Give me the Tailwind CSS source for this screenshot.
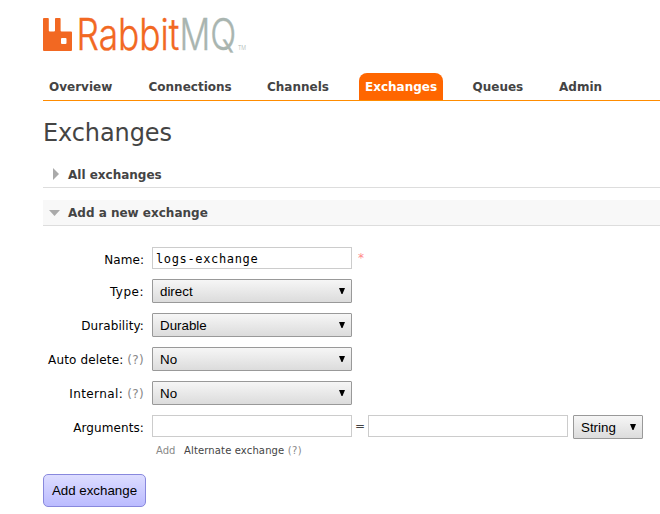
<!DOCTYPE html>
<html lang="en">
<head>
<meta charset="utf-8">
<title>RabbitMQ Management</title>
<script src="https://cdn.jsdelivr.net/npm/@tailwindcss/browser@4"></script>
</head>
<body class="bg-white overflow-hidden h-[514px] w-[660px] pl-[43px] font-['DejaVu_Sans',sans-serif] text-[12px] leading-[14px] text-[#444]">
<header class="pt-[14px]">
<svg class="block overflow-visible" width="210" height="42" viewBox="43 14 210 42" role="img">
<path fill="#f26822" d="M44 18h4q.8 0 .8 1v11.500q0 1 1 1h4.200q1 0 1-1V19q0-1 .8-1h4q.8 0 .8 1v11.500q0 1 1 1h9.400q1 0 1 1V50q0 1-1 1H44q-1 0-1-1V19q0-1 1-1zM61 39v4q0 1 1 1h3.500q1 0 1-1v-4q0-1-1-1H62q-1 0-1 1z" fill-rule="evenodd"/>
<g font-family="Inter" font-weight="300">
<text transform="translate(76.500 50) scale(.7 1)" font-size="44" fill="#f26822" stroke="#f26822" stroke-width=".4" textLength="147" lengthAdjust="spacingAndGlyphs">Rabbit</text>
<text transform="translate(179.500 50) scale(.7 1)" font-size="44" fill="#a9b5b0" stroke="#a9b5b0" stroke-width=".4" textLength="81" lengthAdjust="spacingAndGlyphs">MQ</text>
<text x="238" y="49.500" font-size="6" fill="#a9b5b0" textLength="8" lengthAdjust="spacingAndGlyphs">TM</text>
</g></svg>
</header>
<nav class="mt-[17px] h-[28px] border-b border-[#ff8c00] flex items-start font-bold">
<a class="h-[27px] w-[82px] mr-[17.500px] px-[6px] pt-[7px]">Overview</a>
<a class="h-[27px] w-[102px] mr-[16.500px] px-[6px] pt-[7px]">Connections</a>
<a class="h-[27px] w-[81px] mr-[17px] px-[6px] pt-[7px]">Channels</a>
<a class="h-[27px] w-[84px] mr-[23.500px] px-[6px] pt-[7px] rounded-t-[8px] bg-[#ff6600] text-white">Exchanges</a>
<a class="h-[27px] w-[69px] mr-[17.500px] px-[6px] pt-[7px]">Queues</a>
<a class="h-[27px] px-[6px] pt-[7px]">Admin</a>
</nav>
<h1 class="mt-[17px] h-[30px] text-[24px] leading-[30px] tracking-[-0.1px]">Exchanges</h1>
<h2 class="mt-[14px] h-[26px] border-b border-[#ddd] flex items-start font-bold pt-[6px]">
<svg class="ml-[10px] mr-[9px] block" width="6" height="12" viewBox="0 0 6 12"><path fill="#aaa" d="M0 0l6 6-6 6z"/></svg>All exchanges</h2>
<h2 class="mt-[12px] h-[26px] border-b border-[#ddd] bg-[#f8f8f8] flex items-start font-bold pt-[6px]">
<svg class="ml-[6px] mr-[8px] mt-[4px] block" width="11" height="6" viewBox="0 0 11 6"><path fill="#aaa" d="M0 0h11L5.500 6z"/></svg>Add a new exchange</h2>
<form class="text-black">
<div class="mt-[21px] grid grid-cols-[101px_1fr] gap-x-[8px] grid-rows-[32px_34px_34px_34px_34px_26px_33px]">
<label class="text-right pt-[6px] tracking-[0.05px]">Name:</label>
<div class="flex"><span class="w-[200px] h-[22px] border border-[#ccc] pl-[3px] pt-[4px] font-['DejaVu_Sans_Mono',monospace] tracking-[0.64px]">logs-exchange</span><span class="ml-[6px] pt-[4px] text-[#f88]">*</span></div>

<label class="text-right pt-[6px] tracking-[0.5px]">Type:</label>
<div class="w-[200px] h-[24px] border border-[#999] rounded-[1px] bg-linear-to-b from-[#f6f6f6] to-[#dcdcdc] px-[7px] flex justify-between font-['Liberation_Sans',sans-serif] text-[13.333px] leading-[24px]"><span>direct</span><svg class="mt-[8px] mr-[-1px]" width="6" height="6" viewBox="0 0 6 6"><path d="M0 0h6L3.500 6h-1z"/></svg></div>

<label class="text-right pt-[6px] tracking-[0.1px]">Durability:</label>
<div class="w-[200px] h-[24px] border border-[#999] rounded-[1px] bg-linear-to-b from-[#f6f6f6] to-[#dcdcdc] px-[7px] flex justify-between font-['Liberation_Sans',sans-serif] text-[13.333px] leading-[24px]"><span>Durable</span><svg class="mt-[8px] mr-[-1px]" width="6" height="6" viewBox="0 0 6 6"><path d="M0 0h6L3.500 6h-1z"/></svg></div>

<label class="text-right pt-[6px] whitespace-nowrap tracking-[0.15px]">Auto delete: <span class="text-[#888] tracking-[0.3px]">(?)</span></label>
<div class="w-[200px] h-[24px] border border-[#999] rounded-[1px] bg-linear-to-b from-[#f6f6f6] to-[#dcdcdc] px-[7px] flex justify-between font-['Liberation_Sans',sans-serif] text-[13.333px] leading-[24px]"><span>No</span><svg class="mt-[8px] mr-[-1px]" width="6" height="6" viewBox="0 0 6 6"><path d="M0 0h6L3.500 6h-1z"/></svg></div>

<label class="text-right pt-[6px] tracking-[0.4px]">Internal: <span class="text-[#888] tracking-[0.3px]">(?)</span></label>
<div class="w-[200px] h-[24px] border border-[#999] rounded-[1px] bg-linear-to-b from-[#f6f6f6] to-[#dcdcdc] px-[7px] flex justify-between font-['Liberation_Sans',sans-serif] text-[13.333px] leading-[24px]"><span>No</span><svg class="mt-[8px] mr-[-1px]" width="6" height="6" viewBox="0 0 6 6"><path d="M0 0h6L3.500 6h-1z"/></svg></div>

<label class="text-right pt-[6px] tracking-[0.1px]">Arguments:</label>
<div class="flex items-start"><span class="w-[200px] h-[22px] border border-[#ccc]"></span><span class="w-[16px] text-center pt-[4px] text-[#444]">=</span><span class="w-[200px] h-[22px] border border-[#ccc]"></span>
<div class="ml-[5px] w-[70px] h-[24px] border border-[#999] rounded-[1px] bg-linear-to-b from-[#f6f6f6] to-[#dcdcdc] px-[7px] flex justify-between font-['Liberation_Sans',sans-serif] text-[13.333px] leading-[24px]"><span>String</span><svg class="mt-[8px] mr-[-1px]" width="6" height="6" viewBox="0 0 6 6"><path d="M0 0h6L3.500 6h-1z"/></svg></div></div>

<div class="col-start-2 pl-[4px] pt-[3px] flex text-[10px] text-[#444]"><span class="text-[#888] w-[28px]">Add</span><span class="tracking-[0.14px]">Alternate exchange <span class="text-[#888] tracking-[0.4px]">(?)</span></span></div>
</div>
<button type="button" class="block w-[103px] h-[33px] rounded-[5px] border border-[#8888dd] bg-linear-to-b from-[#ddddff] to-[#bbbbff] font-['Liberation_Sans',sans-serif] text-[13.333px] text-black">Add exchange</button>
</form>
</body>
</html>
